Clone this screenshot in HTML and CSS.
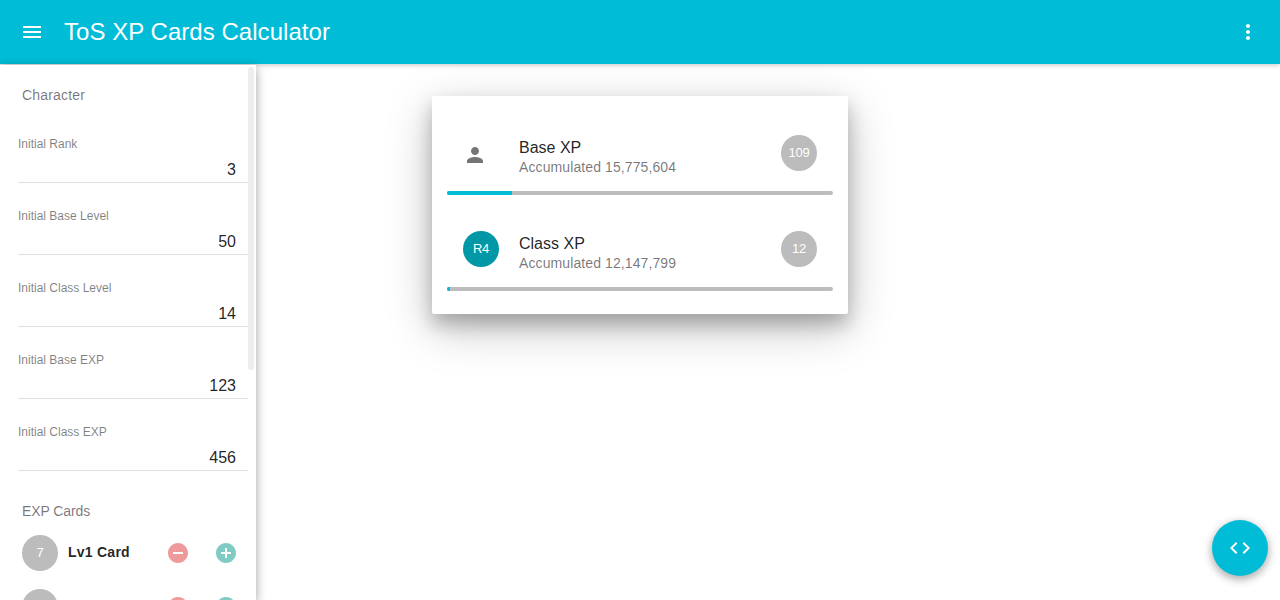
FILE: index.html
```
<!DOCTYPE html>
<html lang="en">
<head>
<meta charset="utf-8">
<title>ToS XP Cards Calculator</title>
<link rel="stylesheet" href="styles.css">
</head>
<body>
<header class="appbar">
  <svg class="icon" viewBox="0 0 24 24"><path d="M3 18h18v-2H3v2zm0-5h18v-2H3v2zm0-7v2h18V6H3z"/></svg>
  <h1 class="title">ToS XP Cards Calculator</h1>
  <svg class="icon" viewBox="0 0 24 24"><path d="M12 8c1.100 0 2-.9 2-2s-.9-2-2-2-2 .9-2 2 .9 2 2 2zm0 2c-1.100 0-2 .9-2 2s.9 2 2 2 2-.9 2-2-.9-2-2-2zm0 6c-1.100 0-2 .9-2 2s.9 2 2 2 2-.9 2-2-.9-2-2-2z"/></svg>
</header>
<div class="layout">
  <aside class="drawer">
    <div class="content">
      <h2 class="subheader">Character</h2>
      <div class="field"><span class="label">Initial Rank</span><span class="value">3</span></div>
      <div class="field"><span class="label">Initial Base Level</span><span class="value">50</span></div>
      <div class="field"><span class="label">Initial Class Level</span><span class="value">14</span></div>
      <div class="field"><span class="label">Initial Base EXP</span><span class="value">123</span></div>
      <div class="field"><span class="label">Initial Class EXP</span><span class="value">456</span></div>
      <h2 class="subheader cards">EXP Cards</h2>
      <div class="row">
        <span class="avatar">7</span><span class="name">Lv1 Card</span>
        <svg class="icon minus" viewBox="0 0 24 24"><path d="M12 2C6.480 2 2 6.480 2 12s4.480 10 10 10 10-4.480 10-10S17.520 2 12 2zm5 11H7v-2h10v2z"/></svg>
        <svg class="icon plus" viewBox="0 0 24 24"><path d="M12 2C6.480 2 2 6.480 2 12s4.480 10 10 10 10-4.480 10-10S17.520 2 12 2zm5 11h-4v4h-2v-4H7v-2h4V7h2v4h4v2z"/></svg>
      </div>
      <div class="row">
        <span class="avatar"></span><span class="name"></span>
        <svg class="icon minus" viewBox="0 0 24 24"><path d="M12 2C6.480 2 2 6.480 2 12s4.480 10 10 10 10-4.480 10-10S17.520 2 12 2zm5 11H7v-2h10v2z"/></svg>
        <svg class="icon plus" viewBox="0 0 24 24"><path d="M12 2C6.480 2 2 6.480 2 12s4.480 10 10 10 10-4.480 10-10S17.520 2 12 2zm5 11h-4v4h-2v-4H7v-2h4V7h2v4h4v2z"/></svg>
      </div>
    </div>
    <div class="thumb"></div>
  </aside>
  <main class="main">
    <section class="card">
      <div class="item">
        <svg class="icon person" viewBox="0 0 24 24"><path d="M12 12c2.210 0 4-1.790 4-4s-1.790-4-4-4-4 1.790-4 4 1.790 4 4 4zm0 2c-2.670 0-8 1.340-8 4v2h16v-2c0-2.660-5.330-4-8-4z"/></svg>
        <div class="text"><div class="primary">Base XP</div><div class="secondary">Accumulated 15,775,604</div></div>
        <span class="avatar">109</span>
      </div>
      <div class="progress"><div class="bar" style="width:16.8%"></div></div>
      <div class="item second">
        <span class="avatar rank">R4</span>
        <div class="text"><div class="primary">Class XP</div><div class="secondary">Accumulated 12,147,799</div></div>
        <span class="avatar">12</span>
      </div>
      <div class="progress"><div class="bar" style="width:0.8%"></div></div>
    </section>
  </main>
</div>
<button class="fab" aria-label="Source"><svg class="icon" viewBox="0 0 24 24"><path d="M9.400 16.600L4.800 12l4.600-4.600L8 6l-6 6 6 6 1.400-1.400zm5.200 0l4.600-4.600-4.600-4.600L16 6l6 6-6 6-1.400-1.400z"/></svg></button>
</body>
</html>
```
FILE: styles.css
```
* { box-sizing: border-box; }
body { margin: 0; height: 600px; overflow: hidden; display: flex; flex-direction: column; background: #fff; font-family: "Liberation Sans", Arial, sans-serif; color: rgba(0,0,0,.87); }
h1, h2 { margin: 0; font-weight: 400; }
.icon { width: 24px; height: 24px; flex: none; fill: currentColor; display: block; }
.appbar { height: 64px; flex: none; display: flex; align-items: center; padding: 0 20px; background: #00bcd7; color: #fff; box-shadow: 0 1px 6px rgba(0,0,0,.12), 0 1px 4px rgba(0,0,0,.12); }
.title { flex: 1; margin-left: 20px; font-size: 24px; line-height: 64px; letter-spacing: .04px; }
.layout { flex: 1; min-height: 0; display: flex; margin-top: 1px; }
.drawer { width: 256px; flex: none; display: flex; background: #fff; box-shadow: 0 3px 10px rgba(0,0,0,.16), 0 3px 10px rgba(0,0,0,.23); }
.content { width: 248px; overflow: hidden; padding-top: 6px; }
.thumb { width: 6px; height: 303px; margin-top: 2px; border-radius: 3px; background: #ededed; }
.subheader { padding-left: 22px; font-size: 14px; line-height: 48px; letter-spacing: .18px; color: rgba(0,0,0,.54); }
.field { height: 72px; margin-left: 18px; display: flex; flex-direction: column; border-bottom: 1px solid #e0e0e0; padding-top: 25px; }
.subheader + .field { height: 64px; padding-top: 17px; }
.label { font-size: 12px; line-height: 16px; color: rgba(0,0,0,.5); }
.value { font-size: 16px; line-height: 18px; margin-top: 9px; padding-right: 12px; text-align: right; }
.cards { margin-top: 16px; letter-spacing: -.1px; }
.row { height: 36px; margin-bottom: 18px; display: flex; align-items: center; padding: 0 10px 0 22px; }
.avatar { width: 36px; height: 36px; flex: none; border-radius: 50%; background: #bcbcbc; color: #fff; font-size: 13px; line-height: 36px; text-align: center; letter-spacing: -.2px; }
.name { flex: 1; margin-left: 10px; padding-bottom: 2px; font-size: 14px; font-weight: 700; letter-spacing: .25px; }
.minus { color: #ef9a9a; margin-right: 24px; }
.plus { color: #80cbc4; }
.main { flex: 1; }
.card { width: 416px; height: 218px; margin: 31px 0 0 176px; padding: 31px 15px 0; border-radius: 2px; background: #fff; box-shadow: 0 14px 45px rgba(0,0,0,.25), 0 10px 18px rgba(0,0,0,.22); }
.item { height: 64px; padding: 0 16px; display: flex; align-items: flex-start; }
.item .avatar { margin-top: 8px; }
.item.second { margin-top: 28px; }
.item .person { margin-top: 16px; color: #757575; }
.text { flex: 1; padding-top: 11px; }
.item .rank { background: #0097a7; margin-right: 20px; }
.primary { font-size: 16px; line-height: 20px; }
.secondary { font-size: 14px; line-height: 18px; letter-spacing: .1px; color: rgba(0,0,0,.54); }
.person + .text { margin-left: 32px; }
.progress { height: 4px; border-radius: 2px; background: #bdbdbd; overflow: hidden; }
.bar { height: 4px; background: #00bcd4; }
.fab { position: absolute; right: 12px; bottom: 24px; width: 56px; height: 56px; padding: 16px; border: 0; border-radius: 50%; background: #00bcd7; color: #fff; box-shadow: 0 3px 10px rgba(0,0,0,.16), 0 3px 10px rgba(0,0,0,.23); }
```
